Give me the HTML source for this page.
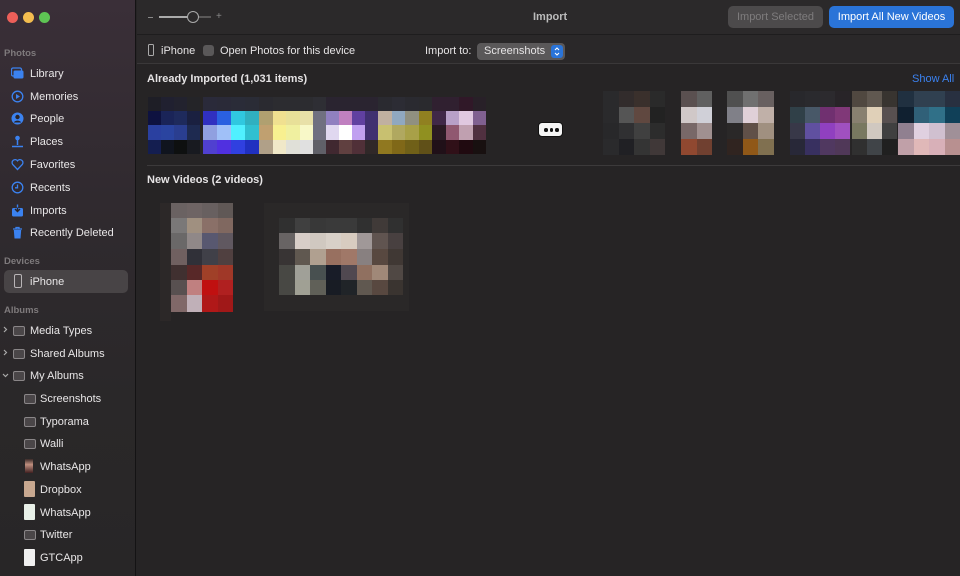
<!DOCTYPE html>
<html><head><meta charset="utf-8"><style>
*{margin:0;padding:0;box-sizing:border-box}
body{width:960px;height:576px;overflow:hidden;background:#262425;font-family:"Liberation Sans",sans-serif;color:#e6e4e5;position:relative}
.sb{position:absolute;left:0;top:0;width:136px;height:576px;background:linear-gradient(#3a2f38 0px,#302a2f 200px,#2a2829 400px,#282627);border-right:1px solid #141314}
.t{position:absolute;font-size:11px;white-space:nowrap}
.lbl{position:absolute;left:4px;font-size:9.5px;color:#7e7a7c;font-weight:bold}
.it{position:absolute;left:30px;font-size:11px;color:#e8e6e7;margin-top:1px}
.ic{position:absolute;left:11px;width:13px;height:13px}
.al{position:absolute;width:12px;height:10px;border:1.5px solid #8a8688;border-radius:2px;background:#4a4648}
.g{position:absolute;display:grid}
.g div{width:100%;height:100%}
.d{position:absolute;top:5px;width:3.5px;height:3.5px;border-radius:50%;background:#111}
</style></head><body>
<div class="sb"></div>
<div style="position:absolute;left:7px;top:12px;width:11px;height:11px;border-radius:50%;background:#ec5f59"></div>
<div style="position:absolute;left:23px;top:12px;width:11px;height:11px;border-radius:50%;background:#f3bd4f"></div>
<div style="position:absolute;left:39px;top:12px;width:11px;height:11px;border-radius:50%;background:#5ec454"></div>

<div class="lbl" style="top:48px">Photos</div>
<svg class="ic" style="top:67px" viewBox="0 0 13 13"><rect x="0.5" y="1" width="10" height="8" rx="1.5" fill="none" stroke="#3b82f0" stroke-width="1.3"/><rect x="2.5" y="3.5" width="10" height="8" rx="1.5" fill="#3b82f0"/></svg>
<div class="it" style="top:67px">Library</div>
<svg class="ic" style="top:90px" viewBox="0 0 13 13"><circle cx="6.5" cy="6.5" r="5.3" fill="none" stroke="#3b82f0" stroke-width="1.3"/><path d="M5 4l4 2.5L5 9z" fill="#3b82f0"/></svg>
<div class="it" style="top:90px">Memories</div>
<svg class="ic" style="top:112px" viewBox="0 0 13 13"><circle cx="6.5" cy="6.5" r="6" fill="#3b82f0"/><circle cx="6.5" cy="5" r="2.2" fill="#2a2428"/><path d="M2.8 10.5a4 3 0 0 1 7.4 0" fill="#2a2428"/></svg>
<div class="it" style="top:112px">People</div>
<svg class="ic" style="top:135px" viewBox="0 0 13 13"><circle cx="6.5" cy="3" r="2.3" fill="#3b82f0"/><path d="M6.5 5v5M1 11.5h11" stroke="#3b82f0" stroke-width="1.5"/></svg>
<div class="it" style="top:135px">Places</div>
<svg class="ic" style="top:158px" viewBox="0 0 13 13"><path d="M6.5 11.5L1.7 6.5A2.8 2.8 0 0 1 6.5 2.8a2.8 2.8 0 0 1 4.8 3.7z" fill="none" stroke="#3b82f0" stroke-width="1.3"/></svg>
<div class="it" style="top:158px">Favorites</div>
<svg class="ic" style="top:181px" viewBox="0 0 13 13"><circle cx="6.5" cy="6.5" r="5.3" fill="none" stroke="#3b82f0" stroke-width="1.3"/><path d="M6.5 3.5v3.3H4" stroke="#3b82f0" stroke-width="1.3" fill="none"/></svg>
<div class="it" style="top:181px">Recents</div>
<svg class="ic" style="top:204px" viewBox="0 0 13 13"><rect x="1" y="4" width="11" height="8.5" rx="1.5" fill="#3b82f0"/><path d="M6.5 0.5v7M4 5l2.5 2.5L9 5" stroke="#2a2428" stroke-width="1.4" fill="none"/><path d="M6.5 0.5v3" stroke="#3b82f0" stroke-width="1.4"/></svg>
<div class="it" style="top:204px">Imports</div>
<svg class="ic" style="top:226px" viewBox="0 0 13 13"><path d="M2 3h9M5 3V1.5h3V3" stroke="#3b82f0" stroke-width="1.3" fill="none"/><path d="M2.8 4h7.4l-.7 8.5H3.5z" fill="#3b82f0"/></svg>
<div class="it" style="top:226px">Recently Deleted</div>

<div class="lbl" style="top:256px">Devices</div>
<div style="position:absolute;left:4px;top:270px;width:124px;height:23px;background:#484446;border-radius:5px"></div>
<div style="position:absolute;left:14px;top:274px;width:8px;height:14px;border:1.3px solid #b8b4b6;border-radius:2px"></div>
<div class="it" style="top:275px">iPhone</div>

<div class="lbl" style="top:305px">Albums</div>
<svg style="position:absolute;left:3px;top:326px" width="5" height="7" viewBox="0 0 5 7"><path d="M1 1l2.5 2.5L1 6" stroke="#aaa" stroke-width="1.2" fill="none"/></svg>
<div class="al" style="left:13px;top:326px"></div>
<div class="it" style="top:324px">Media Types</div>
<svg style="position:absolute;left:3px;top:349px" width="5" height="7" viewBox="0 0 5 7"><path d="M1 1l2.5 2.5L1 6" stroke="#aaa" stroke-width="1.2" fill="none"/></svg>
<div class="al" style="left:13px;top:349px"></div>
<div class="it" style="top:347px">Shared Albums</div>
<svg style="position:absolute;left:2px;top:373px" width="7" height="5" viewBox="0 0 7 5"><path d="M1 1l2.5 2.5L6 1" stroke="#aaa" stroke-width="1.2" fill="none"/></svg>
<div class="al" style="left:13px;top:371px"></div>
<div class="it" style="top:369px">My Albums</div>
<div class="al" style="left:24px;top:394px"></div><div class="it" style="left:40px;top:392px">Screenshots</div>
<div class="al" style="left:24px;top:417px"></div><div class="it" style="left:40px;top:415px">Typorama</div>
<div class="al" style="left:24px;top:439px"></div><div class="it" style="left:40px;top:437px">Walli</div>
<div style="position:absolute;left:25px;top:459px;width:8px;height:14px;background:linear-gradient(#3a2a28,#c09080 40%,#402020)"></div><div class="it" style="left:40px;top:460px">WhatsApp</div>
<div style="position:absolute;left:24px;top:481px;width:11px;height:16px;background:#c8a890;border-radius:1px"></div><div class="it" style="left:40px;top:483px">Dropbox</div>
<div style="position:absolute;left:24px;top:504px;width:11px;height:16px;background:#e8f0e8;border-radius:1px"></div><div class="it" style="left:40px;top:506px">WhatsApp</div>
<div class="al" style="left:24px;top:530px"></div><div class="it" style="left:40px;top:528px">Twitter</div>
<div style="position:absolute;left:24px;top:549px;width:11px;height:17px;background:#f0f0f0;border-radius:1px"></div><div class="it" style="left:40px;top:551px">GTCApp</div>

<!-- top bar -->
<div style="position:absolute;left:137px;top:0;width:823px;height:34px;background:#2b292a"></div>
<div style="position:absolute;left:148px;top:17px;width:5px;height:1px;background:#888"></div>
<div style="position:absolute;left:159px;top:16px;width:52px;height:2px;background:#5a5858"></div>
<div style="position:absolute;left:159px;top:16px;width:32px;height:2px;background:#aaa"></div>
<div style="position:absolute;left:187px;top:11px;width:12px;height:12px;border-radius:50%;border:1.5px solid #aaa;background:#2b292a"></div>
<div class="t" style="left:216px;top:11px;color:#888;font-size:10px">+</div>
<div class="t" style="left:533px;top:11px;font-weight:bold;color:#bbb">Import</div>
<div style="position:absolute;left:728px;top:6px;width:95px;height:22px;border-radius:5px;background:#4c4a4b;color:#7e7c7d;font-size:11px;text-align:center;line-height:22px">Import Selected</div>
<div style="position:absolute;left:829px;top:6px;width:125px;height:22px;border-radius:5px;background:#2a74d8;color:#fff;font-size:11px;text-align:center;line-height:22px">Import All New Videos</div>

<div style="position:absolute;left:137px;top:34px;width:823px;height:30px;background:#2a2829;border-top:1px solid #1e1d1e;border-bottom:1px solid #3a3839"></div>
<div style="position:absolute;left:148px;top:44px;width:6px;height:12px;border:1.2px solid #aaa;border-radius:1.5px"></div>
<div class="t" style="left:161px;top:45px">iPhone</div>
<div style="position:absolute;left:203px;top:45px;width:11px;height:11px;border-radius:3px;background:#5a5859"></div>
<div class="t" style="left:220px;top:45px">Open Photos for this device</div>
<div class="t" style="left:425px;top:45px">Import to:</div>
<div style="position:absolute;left:477px;top:43px;width:88px;height:17px;border-radius:4px;background:#5a5859"></div>
<div class="t" style="left:484px;top:45px">Screenshots</div>
<svg style="position:absolute;left:551px;top:45px" width="12" height="13" viewBox="0 0 12 13"><rect width="12" height="13" rx="3" fill="#2a74d8"/><path d="M4 5l2-2 2 2M4 8l2 2 2-2" stroke="#fff" stroke-width="1.1" fill="none"/></svg>

<div class="t" style="left:147px;top:73px;font-weight:bold">Already Imported (1,031 items)</div>
<div class="t" style="left:912px;top:73px;color:#3b82f0">Show All</div>
<div style="position:absolute;left:147px;top:165px;width:813px;height:1px;background:#3c3a3b"></div>
<div class="t" style="left:147px;top:174px;font-weight:bold">New Videos (2 videos)</div>

<div style="position:absolute;left:538px;top:122px;width:25px;height:15px;border-radius:4px;background:#f4f4f4;border:1px solid #111"><div class="d" style="left:5px"></div><div class="d" style="left:10.5px"></div><div class="d" style="left:16px"></div></div>

<!-- mosaics row 1 -->
<div class="g" style="left:148px;top:97px;grid-template-columns:repeat(4,13px);grid-template-rows:14px 14px 15px 14px">
<div style="background:#1e1e26"></div><div style="background:#202030"></div><div style="background:#22222e"></div><div style="background:#242428"></div>
<div style="background:#0e1240"></div><div style="background:#1a2458"></div><div style="background:#1e2a5c"></div><div style="background:#1a2040"></div>
<div style="background:#2a40a0"></div><div style="background:#2a44a0"></div><div style="background:#2a3e90"></div><div style="background:#1e2a50"></div>
<div style="background:#141e50"></div><div style="background:#10141e"></div><div style="background:#0e1010"></div><div style="background:#181a20"></div></div>
<div class="g" style="left:203px;top:97px;grid-template-columns:repeat(4,14px);grid-template-rows:14px 14px 15px 14px">
<div style="background:#2a2a3a"></div><div style="background:#2a2a38"></div><div style="background:#2a2c38"></div><div style="background:#2a2c36"></div>
<div style="background:#3030c0"></div><div style="background:#2a60e0"></div><div style="background:#30c8e0"></div><div style="background:#30b0c0"></div>
<div style="background:#90a0e0"></div><div style="background:#a0c0f8"></div><div style="background:#50f0ff"></div><div style="background:#30c0d0"></div>
<div style="background:#5040d0"></div><div style="background:#5030e0"></div><div style="background:#3040e0"></div><div style="background:#2030c0"></div></div>
<div class="g" style="left:259px;top:97px;grid-template-columns:repeat(5,13.5px);grid-template-rows:14px 14px 15px 14px">
<div style="background:#2a2a30"></div><div style="background:#2c2c30"></div><div style="background:#2c2c30"></div><div style="background:#2c2c30"></div><div style="background:#2e2e34"></div>
<div style="background:#b0a070"></div><div style="background:#f0e090"></div><div style="background:#e8e098"></div><div style="background:#e8e0a8"></div><div style="background:#707080"></div>
<div style="background:#c0a070"></div><div style="background:#f8f090"></div><div style="background:#f0f0a0"></div><div style="background:#f8f8c8"></div><div style="background:#707080"></div>
<div style="background:#b0a088"></div><div style="background:#f0e8c8"></div><div style="background:#e0e0d8"></div><div style="background:#e0e0e0"></div><div style="background:#606068"></div></div>
<div class="g" style="left:326px;top:97px;grid-template-columns:repeat(4,13px);grid-template-rows:14px 14px 15px 14px">
<div style="background:#2a2430"></div><div style="background:#2a2430"></div><div style="background:#2a2430"></div><div style="background:#2a2430"></div>
<div style="background:#9080c0"></div><div style="background:#c080c0"></div><div style="background:#6040a0"></div><div style="background:#403070"></div>
<div style="background:#e0d8f0"></div><div style="background:#ffffff"></div><div style="background:#c0a0f0"></div><div style="background:#403070"></div>
<div style="background:#402830"></div><div style="background:#604040"></div><div style="background:#503038"></div><div style="background:#302828"></div></div>
<div class="g" style="left:378px;top:97px;grid-template-columns:repeat(4,13.5px);grid-template-rows:14px 14px 15px 14px">
<div style="background:#2a2a30"></div><div style="background:#2c2c34"></div><div style="background:#2a2a30"></div><div style="background:#2a2a2e"></div>
<div style="background:#c0b0a0"></div><div style="background:#90a8c0"></div><div style="background:#909080"></div><div style="background:#908020"></div>
<div style="background:#c8c070"></div><div style="background:#b0a860"></div><div style="background:#a8a048"></div><div style="background:#909020"></div>
<div style="background:#907820"></div><div style="background:#806818"></div><div style="background:#706018"></div><div style="background:#605018"></div></div>
<div class="g" style="left:432px;top:97px;grid-template-columns:repeat(4,13.5px);grid-template-rows:14px 14px 15px 14px">
<div style="background:#302030"></div><div style="background:#302030"></div><div style="background:#301828"></div><div style="background:#282028"></div>
<div style="background:#402848"></div><div style="background:#b8a0c8"></div><div style="background:#e0c8e0"></div><div style="background:#806090"></div>
<div style="background:#2a1a24"></div><div style="background:#905870"></div><div style="background:#c0a0b0"></div><div style="background:#503040"></div>
<div style="background:#201018"></div><div style="background:#301018"></div><div style="background:#200a10"></div><div style="background:#181010"></div></div>

<div class="g" style="left:603px;top:91px;grid-template-columns:repeat(4,15.5px);grid-template-rows:16px 16px 16px 16px">
<div style="background:#2a2a2c"></div><div style="background:#322c2c"></div><div style="background:#3a302c"></div><div style="background:#2a2a2a"></div>
<div style="background:#2a2a2c"></div><div style="background:#555555"></div><div style="background:#604840"></div><div style="background:#222222"></div>
<div style="background:#28282a"></div><div style="background:#303032"></div><div style="background:#404040"></div><div style="background:#2c2c2c"></div>
<div style="background:#2a2a2c"></div><div style="background:#202024"></div><div style="background:#343434"></div><div style="background:#403838"></div></div>
<div class="g" style="left:681px;top:91px;grid-template-columns:repeat(2,15.5px);grid-template-rows:16px 16px 16px 16px">
<div style="background:#5a5050"></div><div style="background:#606060"></div>
<div style="background:#d0c8c8"></div><div style="background:#d0d0d8"></div>
<div style="background:#786868"></div><div style="background:#a09090"></div>
<div style="background:#904830"></div><div style="background:#704030"></div></div>
<div class="g" style="left:727px;top:91px;grid-template-columns:repeat(3,15.5px);grid-template-rows:16px 16px 16px 16px">
<div style="background:#505050"></div><div style="background:#707070"></div><div style="background:#686060"></div>
<div style="background:#808088"></div><div style="background:#e0d0d8"></div><div style="background:#c0b0a8"></div>
<div style="background:#2a2828"></div><div style="background:#605048"></div><div style="background:#a09080"></div>
<div style="background:#302420"></div><div style="background:#905818"></div><div style="background:#807050"></div></div>
<div class="g" style="left:790px;top:91px;grid-template-columns:repeat(4,15px);grid-template-rows:16px 16px 16px 16px">
<div style="background:#28282c"></div><div style="background:#2a2a2e"></div><div style="background:#2c2a2e"></div><div style="background:#282428"></div>
<div style="background:#304048"></div><div style="background:#485868"></div><div style="background:#703070"></div><div style="background:#803878"></div>
<div style="background:#383848"></div><div style="background:#6050a0"></div><div style="background:#9040c0"></div><div style="background:#a050c0"></div>
<div style="background:#282838"></div><div style="background:#383060"></div><div style="background:#503860"></div><div style="background:#503858"></div></div>
<div class="g" style="left:852px;top:91px;grid-template-columns:repeat(3,15px);grid-template-rows:16px 16px 16px 16px">
<div style="background:#504840"></div><div style="background:#605850"></div><div style="background:#383430"></div>
<div style="background:#888070"></div><div style="background:#e0d0b8"></div><div style="background:#585050"></div>
<div style="background:#787860"></div><div style="background:#d0c8c0"></div><div style="background:#404040"></div>
<div style="background:#303030"></div><div style="background:#404448"></div><div style="background:#202020"></div></div>
<div class="g" style="left:898px;top:91px;grid-template-columns:repeat(4,15.5px);grid-template-rows:16px 16px 16px 16px">
<div style="background:#203040"></div><div style="background:#304050"></div><div style="background:#304050"></div><div style="background:#283040"></div>
<div style="background:#102030"></div><div style="background:#306078"></div><div style="background:#307088"></div><div style="background:#104058"></div>
<div style="background:#908090"></div><div style="background:#e0d0e0"></div><div style="background:#d0c0d0"></div><div style="background:#a09098"></div>
<div style="background:#c0a0a8"></div><div style="background:#e0b8b8"></div><div style="background:#d8b0b8"></div><div style="background:#b89090"></div></div>

<!-- videos -->
<div style="position:absolute;left:160px;top:203px;width:11px;height:118px;background:#2c2828"></div>
<div class="g" style="left:171px;top:203px;grid-template-columns:repeat(4,15.5px);grid-template-rows:15px 15px 16px 16px 15px 15px 17px">
<div style="background:#6a6262"></div><div style="background:#6e6464"></div><div style="background:#686060"></div><div style="background:#605856"></div>
<div style="background:#7a7878"></div><div style="background:#a09080"></div><div style="background:#8a7068"></div><div style="background:#806860"></div>
<div style="background:#6a6868"></div><div style="background:#908888"></div><div style="background:#585870"></div><div style="background:#605860"></div>
<div style="background:#706060"></div><div style="background:#303038"></div><div style="background:#404048"></div><div style="background:#504040"></div>
<div style="background:#403030"></div><div style="background:#582828"></div><div style="background:#a04028"></div><div style="background:#a03828"></div>
<div style="background:#585050"></div><div style="background:#c08080"></div><div style="background:#c01010"></div><div style="background:#b02020"></div>
<div style="background:#806868"></div><div style="background:#c0b0b8"></div><div style="background:#b01818"></div><div style="background:#a01818"></div></div>
<div style="position:absolute;left:264px;top:203px;width:145px;height:108px;background:#2a2828"></div>
<div class="g" style="left:279px;top:218px;grid-template-columns:repeat(8,15.5px);grid-template-rows:15px 16px 16px 15px 15px">
<div style="background:#303030"></div><div style="background:#404040"></div><div style="background:#383838"></div><div style="background:#3a3a3a"></div><div style="background:#3a3a3a"></div><div style="background:#303030"></div><div style="background:#403a38"></div><div style="background:#303030"></div>
<div style="background:#686464"></div><div style="background:#d8cec8"></div><div style="background:#d0c8c0"></div><div style="background:#d8d0c8"></div><div style="background:#d8ccc0"></div><div style="background:#a09898"></div><div style="background:#605450"></div><div style="background:#484040"></div>
<div style="background:#383434"></div><div style="background:#605850"></div><div style="background:#b0a090"></div><div style="background:#987060"></div><div style="background:#a07868"></div><div style="background:#888080"></div><div style="background:#584840"></div><div style="background:#403834"></div>
<div style="background:#484844"></div><div style="background:#a0a098"></div><div style="background:#485050"></div><div style="background:#181c28"></div><div style="background:#504850"></div><div style="background:#907060"></div><div style="background:#a08878"></div><div style="background:#504844"></div>
<div style="background:#484844"></div><div style="background:#a0a094"></div><div style="background:#606058"></div><div style="background:#181c24"></div><div style="background:#202428"></div><div style="background:#605850"></div><div style="background:#584840"></div><div style="background:#3a3430"></div></div>
</body></html>
